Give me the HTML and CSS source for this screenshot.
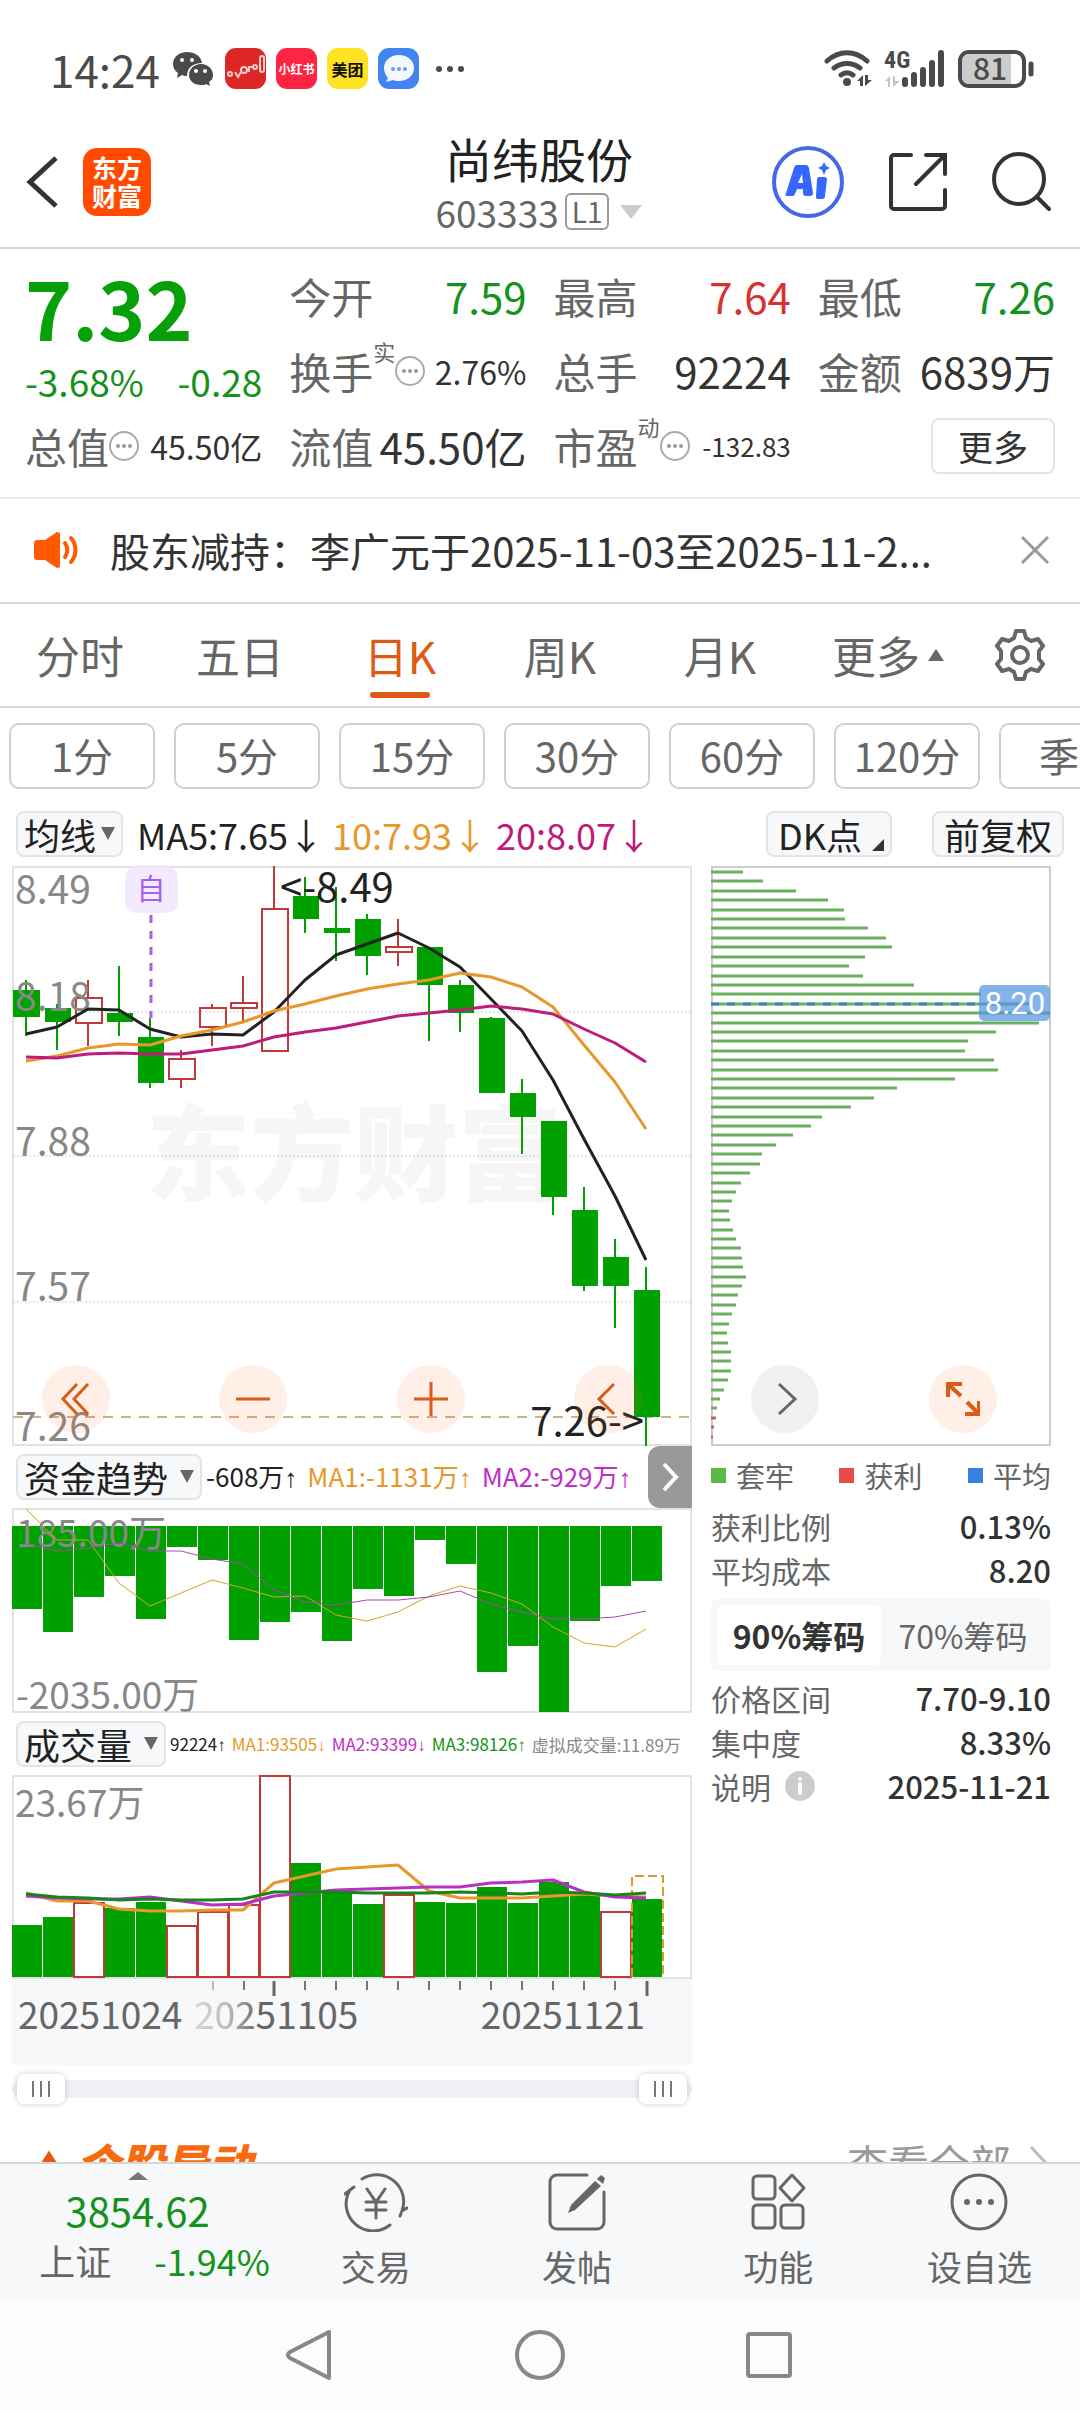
FILE: index.html
```html
<!DOCTYPE html>
<html lang="zh-CN">
<head>
<meta charset="utf-8">
<meta name="viewport" content="width=device-width, initial-scale=1">
<title>尚纬股份 603333</title>
<link rel="stylesheet" href="styles.css">
</head>
<body>

<div class="status">
  <div class="status-left">
    <time class="clock">14:24</time>
    <svg class="wechat" viewBox="0 0 40 34"><path fill="#4a4a4a" d="M14 0C6 0 0 5 0 12c0 4 2 7 5 9l-1 5 5-3c2 1 4 1 5 1C14 16 20 11 29 11 28 4 22 0 14 0z"/><path fill="#4a4a4a" d="M28 12c-7 0-12 5-12 11s5 10 12 10c2 0 4 0 5-1l4 2-1-4c3-2 4-4 4-7 0-6-5-11-12-11z"/><g fill="#fff"><circle cx="9" cy="8" r="2"/><circle cx="19" cy="8" r="2"/><circle cx="23" cy="19" r="2"/><circle cx="32" cy="19" r="2"/></g></svg>
    <svg class="app app-red" viewBox="0 0 41 41"><g fill="none" stroke="#f8cbc7" stroke-width="2"><circle cx="5" cy="26" r="2"/><path d="M10 24l3 5 3-5"/><circle cx="19" cy="22" r="3"/><path d="M24 24v-5h4"/><circle cx="30" cy="19" r="2"/><rect x="35" y="8" width="4" height="16" rx="2"/></g></svg>
    <span class="app app-xhs">小红书</span>
    <span class="app app-mt">美团</span>
    <svg class="app app-msg" viewBox="0 0 41 41"><path fill="#f3f8ff" d="M21 7c-9 0-15 6-15 13 0 4 2 8 4 10l-2 4 7-2c2 1 4 1 6 1 9 0 15-6 15-13S30 7 21 7z"/><g fill="#6a9df0"><circle cx="15" cy="21" r="2"/><circle cx="21" cy="21" r="2"/><circle cx="27" cy="21" r="2"/></g></svg>
    <svg class="more-dots" viewBox="0 0 30 8"><g fill="#4a4a4a"><circle cx="4" cy="4" r="3"/><circle cx="15" cy="4" r="3"/><circle cx="26" cy="4" r="3"/></g></svg>
  </div>
  <div class="status-right">
    <svg class="wifi" viewBox="0 0 48 38"><g fill="none" stroke="#4a4a4a" stroke-width="5" stroke-linecap="round"><path d="M3 11C15 0 31 0 43 11"/><path d="M10 18c8-6 18-6 26 0"/><path d="M17 25c4-3 8-3 12 0"/></g><circle cx="23" cy="32" r="4" fill="#4a4a4a"/><path d="M33 31l6-6v11h-3v-5zM41 25h3v5h4l-7 6z" fill="#4a4a4a"/></svg>
    <svg class="signal" viewBox="0 0 62 38"><text class="sig-text" x="0" y="18">4G</text><path d="M1 31l5-5v11H4v-6zM9 26h2v5h5l-7 6z" fill="#c4c4c4"/><g stroke="#4a4a4a" stroke-width="6" stroke-linecap="round"><path d="M21 30v4M30 25v9M39 20v14M48 13v21M57 3v31"/></g></svg>
    <svg class="battery" viewBox="0 0 76 38"><rect x="2" y="2" width="64" height="34" rx="9" fill="#fff" stroke="#4a4a4a" stroke-width="4"/><path d="M11 4h42v30H11a7 7 0 0 1-7-7V11a7 7 0 0 1 7-7z" fill="#ccc"/><path d="M73 14v10" stroke="#4a4a4a" stroke-width="5" stroke-linecap="round"/><text class="bat-text" x="32" y="30">81</text></svg>
  </div>
</div>

<header class="head">
  <div class="head-side">
    <button class="icon-btn back" aria-label="返回"><svg viewBox="0 0 34 54"><path d="M30 3L4 27l26 24" fill="none" stroke="#333" stroke-width="5"/></svg></button>
    <a class="logo" href="#">东方<br>财富</a>
  </div>
  <div class="head-title">
    <h1>尚纬股份</h1>
    <div class="code">603333<span class="level">L1</span><span class="tri-down"></span></div>
  </div>
  <div class="head-side head-actions">
    <button class="icon-btn ai" aria-label="Ai"><svg viewBox="0 0 72 72"><circle cx="36" cy="36" r="34" fill="none" stroke="#4569e6" stroke-width="4"/><path fill="#3566ff" fill-rule="evenodd" d="M25 19h9c2 0 2 1 3 3l4 25c0 2-1 3-3 3h-4c-2 0-3-1-3-3v-4h-6l-2 5c-1 2-2 2-4 2h-4c-2 0-2-1-1-3l8-25c1-2 1-3 3-3zM30 28l-4 9h5zM47 31h5c2 0 3 1 3 2l-2 17c0 2-1 3-3 3h-4c-2 0-2-1-2-3l1-16c0-2 1-3 2-3zM52 16l2 4 4 2-4 2-2 5-2-5-4-2 4-2z"/></svg></button>
    <button class="icon-btn share" aria-label="分享"><svg viewBox="0 0 58 58"><path d="M22 2H5a3 3 0 0 0-3 3v48a3 3 0 0 0 3 3h48a3 3 0 0 0 3-3V37M37 2h19v19M55 3L27 31" fill="none" stroke="#333" stroke-width="4" stroke-linecap="round"/></svg></button>
    <button class="icon-btn search" aria-label="搜索"><svg viewBox="0 0 60 60"><circle cx="27" cy="27" r="25" fill="none" stroke="#333" stroke-width="4"/><path d="M45 45l12 12" stroke="#333" stroke-width="4" stroke-linecap="round"/></svg></button>
  </div>
</header>

<main class="content">
  <section class="quote">
    <div class="price-cell">
      <div class="price">7.32</div>
      <div class="change"><span>-3.68%</span><span>-0.28</span></div>
    </div>
    <div class="cell"><span>今开</span><b class="down">7.59</b></div>
    <div class="cell"><span>最高</span><b class="up">7.64</b></div>
    <div class="cell"><span>最低</span><b class="down">7.26</b></div>
    <div class="cell"><span>换手</span><sup>实</sup><svg class="hint" viewBox="0 0 30 30"><use href="#hint"/></svg><b class="mid">2.76%</b></div>
    <div class="cell"><span>总手</span><b>92224</b></div>
    <div class="cell"><span>金额</span><b>6839万</b></div>
    <div class="cell"><span>总值</span><svg class="hint" viewBox="0 0 30 30"><use href="#hint"/></svg><b class="mid">45.50亿</b></div>
    <div class="cell"><span>流值</span><b>45.50亿</b></div>
    <div class="cell"><span>市盈</span><sup>动</sup><svg class="hint" viewBox="0 0 30 30"><use href="#hint"/></svg><b class="small">-132.83</b></div>
    <div class="cell cell-end"><button class="more">更多</button></div>
  </section>

  <section class="notice">
    <svg class="horn" viewBox="0 0 46 36"><path fill="#ff5a00" d="M4 8h7L23 0c2 0 3 1 3 2v32c0 1-1 2-3 2L11 28H4c-3 0-4-1-4-4V12c0-3 1-4 4-4z"/><path d="M31 11c3 4 3 10 0 14M37 6c6 7 6 17 0 24" fill="none" stroke="#ff5a00" stroke-width="4" stroke-linecap="round"/></svg>
    <a href="#" class="notice-text">股东减持：李广元于2025-11-03至2025-11-2...</a>
    <button class="icon-btn close" aria-label="关闭"><svg viewBox="0 0 30 30"><path d="M2 2l26 26M28 2L2 28" stroke="#999" stroke-width="3"/></svg></button>
  </section>

  <nav class="tabs">
    <button>分时</button>
    <button>五日</button>
    <button class="active">日K</button>
    <button>周K</button>
    <button>月K</button>
    <button class="tab-more">更多<span class="tri-up"></span></button>
    <button class="gear" aria-label="设置"><svg viewBox="0 0 52 52"><path d="M22 2h8l2 7 5 3 7-2 5 7-4 5v8l4 5-5 7-7-2-5 3-2 7h-8l-2-7-5-3-7 2-5-7 4-5v-8l-4-5 5-7 7 2 5-3z" fill="none" stroke="#666" stroke-width="4" stroke-linejoin="round"/><circle cx="26" cy="26" r="8" fill="none" stroke="#666" stroke-width="4"/></svg></button>
  </nav>

  <div class="periods">
    <button>1分</button><button>5分</button><button>15分</button><button>30分</button><button>60分</button><button>120分</button><button>季K</button>
  </div>

  <div class="ma-row">
    <button class="chip">均线<span class="tri-dark"></span></button>
    <div class="ma-values"><span>MA5:7.65↓</span><span class="orange">10:7.93↓</span><span class="magenta">20:8.07↓</span></div>
    <button class="chip chip-dk">DK点<span class="corner"></span></button>
    <button class="chip chip-adj">前复权</button>
  </div>

  <div class="panes">
    <div class="pane-left">
      <div class="stage">
        <svg class="chart" viewBox="0 0 680 580" role="img" aria-label="日K线">
          <text class="watermark" x="134" y="327">东方财富</text>
          <g class="frame"><path d="M1 1h678v578H1z"/></g>
          <path d="M1 146h678M1 290h678M1 436h678" class="grid"/>
          <path d="M1 551h678" stroke="#cdb38b" stroke-width="2" stroke-dasharray="10 8"/>
          <path class="green" d="M13 114h2v56h-2zM1 124h27v27H1zM44 138h2v46h-2zM33 142h26v14H33zM106 100h2v70h-2zM95 147h26v9H95zM137 152h2v70h-2zM126 171h26v46h-26zM292 11h2v56h-2zM281 30h26v23h-26zM323 21h2v74h-2zM312 62h26v5h-26zM354 48h2v61h-2zM343 53h26v37h-26zM416 81h2v94h-2zM405 81h26v38h-26zM447 114h2v52h-2zM436 119h26v28h-26zM478 151h2v76h-2zM467 152h26v75h-26zM509 213h2v75h-2zM498 227h26v24h-26zM540 255h2v94h-2zM529 255h26v76h-26zM571 321h2v104h-2zM560 344h26v76h-26zM602 373h2v89h-2zM591 391h26v29h-26zM633 401h2v179h-2zM622 424h26v127h-26z"/>
          <path class="red" d="M76 114v18M76 157v23M64 132h26v25H64zM169 184v9M169 213v9M157 193h26v20h-26zM200 138v4M200 161v19M188 142h26v19h-26zM231 110v27M231 142v14M219 137h26v5h-26zM262 0v43M250 43h26v142h-26zM386 53v28M386 86v14M374 81h26v5h-26z"/>
          <g class="axis-label big"><text x="3" y="38">8.49</text><text x="3" y="145">8.18</text><text x="3" y="290">7.88</text><text x="3" y="435">7.57</text><text x="3" y="575">7.26</text></g>
          <g class="line"><path stroke="#222" d="M14 168L45 161 76 143 107 144 138 163 169 171 200 168 231 169 262 146 293 114 324 89 355 78 386 67 417 82 448 101 479 133 510 165 541 214 572 273 603 330 634 394"/><path stroke="#e6982a" d="M14 195L45 190 76 182 107 178 138 179 169 170 200 164 231 156 262 145 293 138 324 130 355 123 386 118 417 114 448 107 479 111 510 121 541 141 572 179 603 216 634 263"/><path stroke="#bd1c7c" d="M14 191L45 192 76 188 107 187 138 188 169 188 200 184 231 180 262 171 293 166 324 162 355 156 386 150 417 147 448 144 479 140 510 143 541 148 572 163 603 177 634 196"/></g>
          <rect x="113" y="1" width="53" height="46" rx="10" fill="#f3eaff"/><text x="139" y="34" class="flag">自</text>
          <path d="M139 49v103" stroke="#a563dd" stroke-width="3" stroke-dasharray="8 8"/>
          <g class="mark"><text x="268" y="36">&lt;-8.49</text><text x="632" y="570" text-anchor="end">7.26-&gt;</text></g>
        </svg>
        <div class="tools">
          <button class="round" aria-label="最早"><svg viewBox="0 0 34 34"><path d="M18 2L4 17l14 15M29 2L15 17l14 15"/></svg></button>
          <button class="round" aria-label="缩小"><svg viewBox="0 0 34 34"><path d="M0 17h34"/></svg></button>
          <button class="round" aria-label="放大"><svg viewBox="0 0 34 34"><path d="M0 17h34M17 0v34"/></svg></button>
          <button class="round" aria-label="左移"><svg viewBox="0 0 34 34"><path d="M23 2L8 17l15 15"/></svg></button>
        </div>
      </div>

      <div class="ind-row">
        <button class="chip">资金趋势<span class="tri-dark wide"></span></button>
        <div class="ind-values"><span>-608万<i>↑</i></span><span class="orange">MA1:-1131万<i>↑</i></span><span class="purple">MA2:-929万<i>↑</i></span></div>
        <button class="drawer" aria-label="展开"><svg viewBox="0 0 18 30"><path d="M3 2l12 13L3 28" fill="none" stroke="#fff" stroke-width="4"/></svg></button>
      </div>
      <svg class="chart" viewBox="0 0 680 205" role="img" aria-label="资金趋势">
        <g class="frame"><path d="M1 1h678v203H1z"/></g>
        <path class="green" d="M0 18h30v83H0zM31 18h30v106H31zM62 18h30v71H62zM93 18h30v50H93zM124 18h30v93h-30zM155 18h30v21h-30zM186 18h30v34h-30zM217 18h30v114h-30zM248 18h30v96h-30zM279 18h30v86h-30zM310 18h30v115h-30zM341 18h30v63h-30zM372 18h30v70h-30zM403 18h30v14h-30zM434 18h30v38h-30zM465 18h30v146h-30zM496 18h30v120h-30zM527 18h30v186h-30zM558 18h30v95h-30zM589 18h30v60h-30zM620 18h30v55h-30z"/>
        <g class="axis-label"><text x="4" y="39">185.00万</text><text x="4" y="201">-2035.00万</text></g>
        <g class="line thin"><path stroke="#d9a02c" d="M14 1L45 32 76 32 107 75 138 98 169 85 200 72 231 80 262 89 293 88 324 107 355 113 386 104 417 88 448 78 479 85 510 96 541 119 572 135 603 139 634 121"/><path stroke="#a548b0" d="M14 36L45 43 76 40 107 35 138 43 169 43 200 51 231 56 262 82 293 94 324 97 355 92 386 92 417 89 448 83 479 96 510 104 541 111 572 111 603 109 634 103"/></g>
      </svg>

      <div class="ind-row">
        <button class="chip">成交量<span class="tri-dark wide"></span></button>
        <div class="ind-values vol"><span>92224<i>↑</i></span><span class="orange">MA1:93505<i>↓</i></span><span class="purple">MA2:93399<i>↓</i></span><span class="down">MA3:98126<i>↑</i></span><span class="grey">虚拟成交量:11.89万</span></div>
      </div>
      <svg class="chart" viewBox="0 0 680 204" role="img" aria-label="成交量">
        <g class="frame"><path d="M1 1h678v202H1z"/></g>
        <g class="axis-label"><text x="3" y="42">23.67万</text></g>
        <path class="green" d="M0 150h30v52H0zM31 142h30v60H31zM93 133h30v69H93zM124 127h30v75h-30zM279 88h30v114h-30zM310 116h30v86h-30zM341 129h30v73h-30zM403 127h30v75h-30zM434 128h30v74h-30zM465 112h30v90h-30zM496 128h30v74h-30zM527 107h30v95h-30zM558 119h30v83h-30zM620 124h30v78h-30z"/>
        <path class="red" d="M62 128h30v74H62zM155 151h30v51h-30zM186 137h30v65h-30zM217 130h30v72h-30zM248 1h30v201h-30zM372 120h30v82h-30zM589 137h30v65h-30z"/>
        <path d="M620 202V101h31v101" fill="none" stroke="#e09a2c" stroke-width="2" stroke-dasharray="9 4"/>
        <g class="line"><path stroke="#e6982a" d="M14 118L45 126 76 126 107 134 138 136 169 136 200 135 231 135 262 108 293 101 324 94 355 92 386 90 417 116 448 123 479 123 510 123 541 121 572 119 603 121 634 122"/><path stroke="#bb30c4" d="M14 121L45 123 76 124 107 124 138 122 169 126 200 130 231 129 262 121 293 118 324 115 355 114 386 113 417 112 448 112 479 108 510 107 541 105 572 117 603 122 634 123"/><path stroke="#16851a" d="M14 119L45 122 76 123 107 125 138 124 169 125 200 125 231 124 262 117 293 117 324 117 355 118 386 118 417 118 448 117 479 118 510 119 541 117 572 118 603 120 634 118"/></g>
      </svg>
      <svg class="chart axis" viewBox="0 0 680 86">
        <defs><linearGradient id="fade"><stop offset="0" stop-color="#d8d8d8"/><stop offset=".2" stop-color="#bbb"/><stop offset=".4" stop-color="#666"/></linearGradient>
        <symbol id="hint" viewBox="0 0 30 30"><circle cx="15" cy="15" r="14" fill="none" stroke="#aaa" stroke-width="2"/><g fill="#999"><circle cx="9" cy="15" r="2"/><circle cx="15" cy="15" r="2"/><circle cx="21" cy="15" r="2"/></g></symbol></defs>
        <path d="M201 2v9" stroke="#bbb" stroke-width="2"/>
        <path d="M232 2v9M293 2v9M324 2v9M355 2v9M386 2v9M417 2v9M448 2v9M479 2v9M510 2v9M541 2v9M572 2v9M603 2v9" stroke="#777" stroke-width="2"/>
        <path d="M262 2v15M635 2v15" stroke="#666" stroke-width="3"/>
        <g class="dates"><text x="6" y="50">20251024</text><text x="182" y="50" fill="url(#fade)">20251105</text><text x="633" y="50" text-anchor="end">20251121</text></g>
      </svg>
      <div class="range">
        <input type="range" min="0" max="100" value="0" aria-label="起始日期">
        <input type="range" min="0" max="100" value="100" aria-label="结束日期">
      </div>
    </div>

    <aside class="pane-right">
      <div class="stage">
        <svg class="chart" viewBox="0 0 340 580" role="img" aria-label="筹码分布">
          <path d="M1 1h338v578H1z" fill="none" stroke="#ccc" stroke-width="2"/>
          <path class="cost" d="M0 6h32M0 15h52M0 25h85M0 34h117M0 44h133M0 53h134M0 62h157M0 72h175M0 81h181M0 91h154M0 100h138M0 110h152M0 119h203M0 128h270M0 138h318M0 147h339M0 157h328M0 166h285M0 175h257M0 185h254M0 194h283M0 204h287M0 213h244M0 222h186M0 232h163M0 241h140M0 251h111M0 260h100M0 269h82M0 279h65M0 288h51M0 298h49M0 307h39M0 317h30M0 326h25M0 335h21M0 345h18M0 354h19M0 364h22M0 373h25M0 382h30M0 392h31M0 401h32M0 411h35M0 420h31M0 429h27M0 439h25M0 448h21M0 458h18M0 467h16M0 477h17M0 486h20M0 495h20M0 505h20M0 514h17M0 524h13M0 533h9M0 542h6"/>
          <path class="profit" d="M0 552h5M0 561h3M0 571h2"/>
          <path d="M0 138h268" stroke="#3f7dca" stroke-width="3" stroke-dasharray="8 8"/>
          <rect x="268" y="119" width="71" height="36" rx="5" fill="#5594e2" fill-opacity=".72"/>
          <text class="avg" x="304" y="148">8.20</text>
        </svg>
        <div class="tools tools-right">
          <button class="round plain" aria-label="右移"><svg viewBox="0 0 34 34"><path d="M11 2l16 15-16 15"/></svg></button>
          <button class="round" aria-label="全屏"><svg viewBox="0 0 34 34"><path d="M2 15V2h14M3 3l12 11M33 19v13H19M32 31L21 20" stroke-width="4"/></svg></button>
        </div>
      </div>
      <div class="legend"><span class="lg-green">套牢</span><span class="lg-red">获利</span><span class="lg-blue">平均</span></div>
      <dl class="stats"><div><dt>获利比例</dt><dd>0.13%</dd></div><div><dt>平均成本</dt><dd>8.20</dd></div></dl>
      <div class="switch"><button class="on">90%筹码</button><button>70%筹码</button></div>
      <dl class="stats"><div><dt>价格区间</dt><dd>7.70-9.10</dd></div><div><dt>集中度</dt><dd>8.33%</dd></div><div><dt>说明<svg class="info" viewBox="0 0 30 30"><circle cx="15" cy="15" r="15" fill="#ccc"/><circle cx="15" cy="8" r="2" fill="#fff"/><path d="M15 13v9" stroke="#fff" stroke-width="4" stroke-linecap="round"/></svg></dt><dd>2025-11-21</dd></div></dl>
    </aside>
  </div>

  <section class="news">
    <svg class="news-icon" viewBox="0 0 40 36"><path d="M6 34L20 12l14 22" fill="none" stroke="#e8590c" stroke-width="6"/></svg>
    <h2>个股异动</h2>
    <a href="#">查看全部<svg viewBox="0 0 18 34"><path d="M2 2l14 15L2 32" fill="none" stroke="#bbb" stroke-width="3"/></svg></a>
  </section>
</main>

<footer class="bar">
  <a class="index" href="#">
    <span class="tri-index"></span>
    <span class="index-value">3854.62</span>
    <span class="index-row"><span>上证</span><b>-1.94%</b></span>
  </a>
  <button class="bar-item"><svg viewBox="0 0 64 60"><g fill="none" stroke="#666" stroke-width="3" stroke-linecap="round"><path d="M18 7a27 27 0 0 1 40 32l5-3M58 39l-2 5M46 53A27 27 0 0 1 6 18L1 22M6 18l4-3M23 17l9 13 9-13M32 30v16M22 30h20M22 38h20"/></g></svg>交易</button>
  <button class="bar-item"><svg viewBox="0 0 64 60"><path d="M42 3H12a7 7 0 0 0-7 7v40a7 7 0 0 0 7 7h40a7 7 0 0 0 7-7V20" fill="none" stroke="#666" stroke-width="3" stroke-linecap="round"/><path fill="#666" d="M50 9l6 5-26 24-7 3 3-8zM52 7l4-4 4 3-2 6z"/></svg>发帖</button>
  <button class="bar-item"><svg viewBox="0 0 64 60"><g fill="none" stroke="#666" stroke-width="3" stroke-linejoin="round"><rect x="7" y="4" width="22" height="23" rx="4"/><rect x="7" y="33" width="22" height="23" rx="4"/><rect x="35" y="33" width="22" height="23" rx="4"/><path d="M46 3l12 13-12 13-12-13z"/></g></svg>功能</button>
  <button class="bar-item"><svg viewBox="0 0 64 60"><circle cx="32" cy="30" r="27" fill="none" stroke="#666" stroke-width="3"/><g fill="#666"><circle cx="20" cy="30" r="3"/><circle cx="32" cy="30" r="3"/><circle cx="44" cy="30" r="3"/></g></svg>设自选</button>
</footer>

<nav class="sysnav">
  <button class="icon-btn" aria-label="返回"><svg viewBox="0 0 50 54"><path d="M44 4v46L5 30c-3-2-3-4 0-6z" fill="none" stroke="#888" stroke-width="4" stroke-linejoin="round"/></svg></button>
  <button class="icon-btn" aria-label="主页"><svg viewBox="0 0 50 54"><circle cx="25" cy="27" r="23" fill="none" stroke="#888" stroke-width="4"/></svg></button>
  <button class="icon-btn" aria-label="最近任务"><svg viewBox="0 0 50 54"><rect x="3" y="6" width="42" height="42" rx="2" fill="none" stroke="#888" stroke-width="4"/></svg></button>
</nav>

</body>
</html>
```
FILE: styles.css
```css
* { box-sizing: border-box; }

body {
  margin: 0;
  height: 100vh;
  display: flex;
  flex-direction: column;
  background: #fff;
  color: #333;
  font-family: "Noto Sans CJK SC", "Noto Sans", sans-serif;
  line-height: 1;
}

button {
  font: inherit;
  color: inherit;
  background: none;
  border: 0;
  padding: 0;
  white-space: nowrap;
}

a { color: inherit; text-decoration: none; }
svg { display: block; flex: none; }
h1, h2, dl, dd { margin: 0; font-weight: 400; }
i { font-style: normal; font-family: "Liberation Sans", sans-serif; }

.down { color: #14921a; }
.up { color: #d93030; }
.orange { color: #e6982a; }
.magenta { color: #bd1c7c; }
.purple { color: #c02fc8; }
.grey { color: #888; }

/* status bar */
.status {
  display: flex;
  justify-content: space-between;
  align-items: center;
  flex: none;
  height: 90px;
  padding: 47px 46px 0 50px;
}
.status-left { display: flex; align-items: center; gap: 10px; }
.clock { font-size: 44px; line-height: 42px; color: #4a4a4a; }
.wechat { width: 40px; height: 34px; margin: 0 2px 0 3px; }
.app {
  width: 41px;
  height: 41px;
  border-radius: 11px;
  display: flex;
  align-items: center;
  justify-content: center;
  white-space: nowrap;
}
.app-red { background: #dd2727; }
.app-xhs { background: #ff2442; color: #fff; font-size: 12px; font-weight: 700; }
.app-mt { background: #ffe221; color: #111; font-size: 16px; font-weight: 700; }
.app-msg { background: #4285f0; }
.more-dots { width: 30px; height: 8px; margin-left: 6px; }
.status-right { display: flex; align-items: center; gap: 12px; }
.wifi { width: 48px; height: 38px; }
.signal { width: 62px; height: 38px; }
.battery { width: 76px; height: 38px; }
.sig-text { font: 700 24px "Roboto Condensed", Roboto, sans-serif; fill: #4a4a4a; }
.bat-text { font-size: 30px; font-weight: 500; fill: #4a4a4a; text-anchor: middle; }

/* header */
.head {
  display: flex;
  align-items: center;
  height: 159px;
  padding: 26px 28px 0 26px;
  border-bottom: 2px solid #d8d8d8;
  flex: none;
}
.head-side { flex: 1; display: flex; align-items: center; gap: 23px; }
.head-actions { justify-content: flex-end; gap: 45px; }
.back svg { width: 34px; height: 54px; }
.logo {
  width: 68px;
  height: 68px;
  border-radius: 14px;
  background: #ff4a00;
  color: #fff;
  font-size: 25px;
  line-height: 28px;
  font-weight: 700;
  text-align: center;
  padding-top: 5px;
}
h1 { font-size: 47px; line-height: 60px; color: #222; text-align: center; }
.code {
  display: flex;
  align-items: center;
  font-size: 37px;
  line-height: 48px;
  color: #666;
}
.level {
  font-size: 28px;
  line-height: 33px;
  border: 2px solid #999;
  border-radius: 6px;
  padding: 0 5px;
  margin: 0 11px 0 6px;
}
.tri-down { border: 11px solid transparent; border-top: 14px solid #ccc; border-bottom: 0; }
.ai svg { width: 72px; height: 72px; }
.share svg { width: 58px; height: 58px; }
.search svg { width: 60px; height: 60px; }

/* scrolling content */
.content { flex: 1; min-height: 0; overflow: hidden; }

.quote {
  display: grid;
  grid-template-columns: repeat(4, 1fr);
  grid-auto-rows: 75px;
  column-gap: 27px;
  padding: 9px 25px 14px;
  border-bottom: 2px solid #ededed;
}
.price-cell { grid-row: span 2; color: #14921a; }
.price { color: #08a008; font-size: 80px; line-height: 96px; font-weight: 700; }
.change { display: flex; justify-content: space-between; font-size: 37px; line-height: 54px; }
.cell { display: flex; align-items: center; font-size: 42px; }
.cell > span { color: #666; }
.cell b { margin-left: auto; font-weight: 400; white-space: nowrap; }
.cell sup { align-self: flex-start; font-size: 22px; line-height: 36px; color: #666; }
.cell .mid { font-size: 32px; }
.cell .small { font-size: 26px; }
.hint { width: 30px; height: 30px; }
.cell-end { justify-content: flex-end; }
.more {
  font-size: 35px;
  width: 124px;
  height: 56px;
  border: 2px solid #e4e4e4;
  border-radius: 8px;
}

.notice {
  display: flex;
  align-items: center;
  height: 105px;
  padding: 0 30px 2px 34px;
  border-bottom: 2px solid #d8d8d8;
}
.horn { width: 46px; height: 36px; margin-right: 30px; }
.notice-text { flex: 1; font-size: 40px; white-space: nowrap; }
.close svg { width: 30px; height: 30px; }

.tabs {
  display: grid;
  grid-template-columns: repeat(6, 4fr) 3fr;
  height: 104px;
  border-bottom: 2px solid #d8d8d8;
  color: #666;
  font-size: 44px;
}
.tabs button { position: relative; display: flex; align-items: center; justify-content: center; }
.tabs .tab-more { padding-left: 16px; }
.tabs .active { color: #df5a12; }
.tabs .active::after {
  content: "";
  position: absolute;
  left: 50%;
  bottom: 8px;
  width: 60px;
  height: 6px;
  margin-left: -30px;
  border-radius: 3px;
  background: #df5a12;
}
.tri-up { border: 8px solid transparent; border-bottom: 12px solid #666; border-top: 0; margin-left: 8px; }
.gear svg { width: 52px; height: 52px; }

.periods {
  display: flex;
  gap: 19px;
  padding: 15px 0 22px 9px;
  overflow: hidden;
}
.periods button {
  flex: none;
  width: 146px;
  height: 66px;
  padding-bottom: 2px;
  border: 2px solid #d0d0d0;
  border-radius: 10px;
  color: #666;
  font-size: 40px;
}

.chip {
  display: flex;
  align-items: center;
  height: 46px;
  padding: 0 6px 1px;
  background: #f6f8fa;
  border: 2px solid #e2e4ea;
  border-radius: 8px;
  color: #222;
  font-size: 36px;
  flex: none;
}
.tri-dark { border: 7px solid transparent; border-top: 13px solid #666; border-bottom: 0; margin-left: 5px; }
.tri-dark.wide { margin: 0 0 0 12px; }
.ma-row { display: flex; align-items: center; padding: 0 16px 9px; font-size: 36px; }
.ma-values { display: flex; flex: 1; gap: 8px; margin-left: 14px; color: #222; white-space: nowrap; }
.ma-values .orange { color: #e6982a; }
.ma-values .magenta { color: #bd1c7c; }
.chip-dk { padding: 0 6px 1px 10px; margin-right: 40px; }
.corner { border: 6px solid #333; border-top-color: transparent; border-left-color: transparent; margin: 22px 0 0 10px; }
.chip-adj { padding: 0 10px 1px; }

/* chart panes */
.panes {
  display: grid;
  grid-template-columns: 2fr 1fr;
  column-gap: 19px;
  padding: 0 29px 0 12px;
}
.pane-left, .pane-right { min-width: 0; }
.stage { position: relative; }
.chart { width: 100%; height: auto; }
.frame path { fill: none; stroke: #e2e2e2; stroke-width: 2; }
.grid { stroke: #ccc; stroke-width: 1; stroke-dasharray: 2 2; }
.green { fill: #00a000; }
.red { fill: none; stroke: #c03a3a; stroke-width: 2; }
.line path { fill: none; stroke-width: 3; stroke-linejoin: round; }
.line.thin path { stroke-width: 1; }
.axis-label text { font-size: 37px; fill: #888; }
.axis-label.big text { font-size: 39px; }
.watermark { font-size: 104px; font-weight: 900; fill: #f6f6f6; }
.flag { font-size: 29px; fill: #a95fe8; text-anchor: middle; }
.mark text { font-size: 40px; fill: #222; }
.axis { background: #f7f8fa; }
.dates { fill: #666; }
.dates text { font-size: 37px; }
.cost { stroke: #6ab05e; stroke-width: 3; }
.profit { stroke: #cc5c5c; stroke-width: 3; }
.avg { font: 31px Roboto, sans-serif; fill: #fff; text-anchor: middle; }

.tools {
  position: absolute;
  left: 30px;
  right: 50px;
  bottom: 13px;
  display: flex;
  justify-content: space-between;
}
.tools-right { left: 40px; right: 54px; }
.round {
  width: 68px;
  height: 68px;
  border-radius: 50%;
  background: rgba(255, 100, 20, 0.1);
  display: flex;
  align-items: center;
  justify-content: center;
}
.round svg { width: 34px; height: 34px; fill: none; stroke: #d95c18; stroke-width: 3; }
.plain { background: #f1f1f1; }
.plain svg { stroke: #666; }

.ind-row { display: flex; align-items: center; height: 62px; padding-left: 4px; }
.ind-values {
  display: flex;
  flex: 1;
  align-items: center;
  gap: 10px;
  min-width: 0;
  margin-left: 4px;
  font-size: 26px;
  color: #222;
  white-space: nowrap;
}
.ind-values .orange { color: #e6982a; }
.ind-values .purple { color: #c02fc8; }
.ind-values .down { color: #14921a; }
.ind-values .grey { color: #888; }
.ind-values.vol { font-size: 17px; gap: 6px; }
.drawer {
  flex: none;
  width: 44px;
  height: 62px;
  border-radius: 12px 0 0 12px;
  background: #999;
  display: flex;
  align-items: center;
  justify-content: center;
}
.drawer svg { width: 18px; height: 30px; }

.range { display: grid; align-items: center; height: 34px; margin-top: 7px; }
.range::before { content: ""; grid-area: 1 / 1; height: 18px; border-radius: 9px; background: #f0f1f4; }
.range input {
  grid-area: 1 / 1;
  -webkit-appearance: none;
  appearance: none;
  margin: 0 5px;
  height: 32px;
  background: none;
  pointer-events: none;
}
.range input::-webkit-slider-thumb {
  -webkit-appearance: none;
  pointer-events: auto;
  width: 48px;
  height: 30px;
  border-radius: 7px;
  box-shadow: 0 0 6px rgba(0, 0, 0, 0.2);
  background:
    linear-gradient(#777, #777) 15px 7px / 2px 16px no-repeat,
    linear-gradient(#777, #777) 23px 7px / 2px 16px no-repeat,
    linear-gradient(#777, #777) 31px 7px / 2px 16px no-repeat,
    #fff;
}

.legend { display: flex; justify-content: space-between; font-size: 29px; line-height: 58px; color: #666; }
.legend span { display: flex; align-items: center; gap: 10px; }
.legend span::before { content: ""; width: 15px; height: 15px; }
.lg-green::before { background: #5cb944; }
.lg-red::before { background: #e64b4b; }
.lg-blue::before { background: #3780e2; }

.stats { font-size: 30px; line-height: 44px; }
.stats div { display: flex; justify-content: space-between; }
.stats dt { display: flex; align-items: center; gap: 14px; color: #666; }
.stats dd { font-size: 31px; font-weight: 500; }
.info { width: 30px; height: 30px; }
.switch {
  display: grid;
  grid-template-columns: 1fr 1fr;
  height: 72px;
  margin: 7px 0 5px;
  padding: 6px;
  border-radius: 6px;
  background: #f7f8fa;
  font-size: 32px;
  color: #666;
}
.switch .on { background: #fff; border-radius: 6px; color: #333; font-weight: 700; }

.news { display: flex; align-items: center; margin-top: 34px; padding: 0 33px 0 29px; }
.news-icon { width: 40px; height: 36px; margin-right: 7px; }
h2 { flex: 1; font-size: 44px; font-weight: 900; font-style: italic; color: #f9690e; }
.news a { display: flex; align-items: center; gap: 18px; font-size: 41px; color: #999; }
.news a svg { width: 18px; height: 34px; }

/* bottom bar */
.bar {
  display: grid;
  grid-template-columns: 275fr repeat(4, 201fr);
  flex: none;
  height: 136px;
  background: #f6f8fa;
  border-top: 2px solid #d4d6da;
  color: #666;
}
.index { display: flex; flex-direction: column; align-items: center; padding-top: 8px; color: #14921a; }
.tri-index { border: 10px solid transparent; border-bottom: 8px solid #777; border-top: 0; }
.index-value { font-size: 40px; line-height: 60px; }
.index-row { display: flex; align-items: center; gap: 43px; padding-left: 34px; font-size: 36px; line-height: 40px; }
.index-row span { color: #666; }
.index-row b { font-weight: 400; }
.bar-item { display: flex; flex-direction: column; align-items: center; gap: 16px; padding-top: 8px; font-size: 35px; line-height: 36px; }
.bar-item svg { width: 64px; height: 60px; }

.sysnav {
  display: flex;
  justify-content: center;
  align-items: center;
  gap: 180px;
  flex: none;
  height: 114px;
  background: #fcfcfc;
}
.sysnav svg { width: 50px; height: 54px; }
```
